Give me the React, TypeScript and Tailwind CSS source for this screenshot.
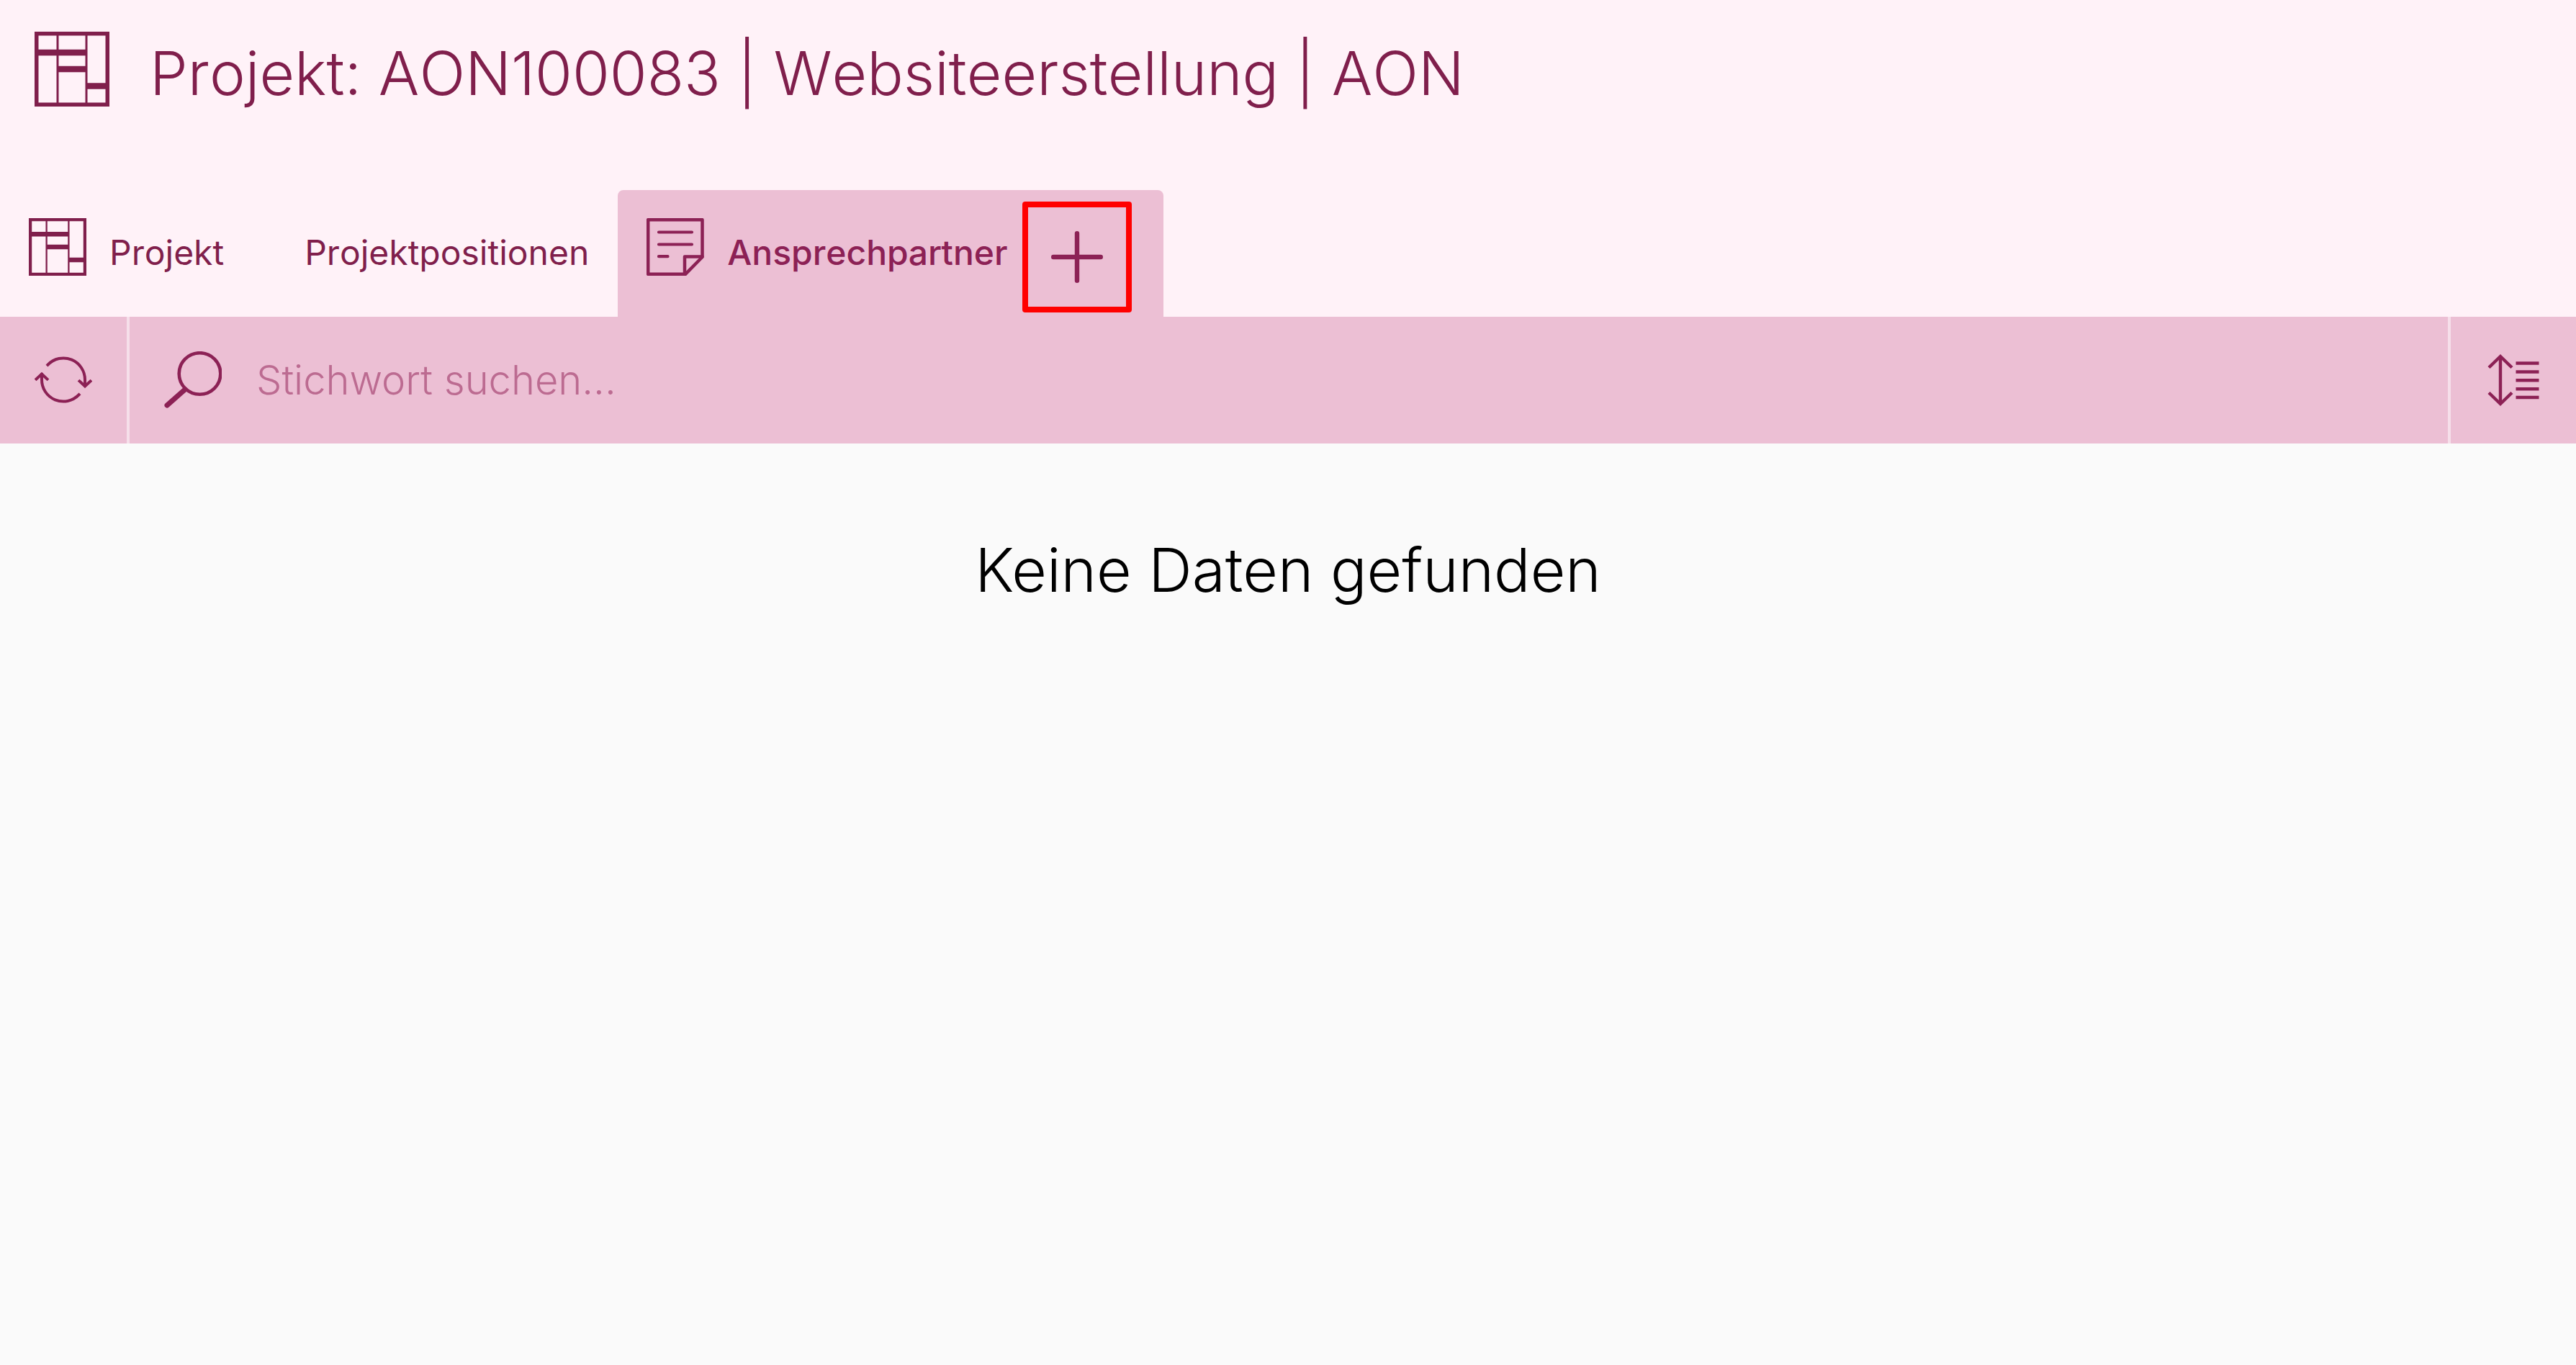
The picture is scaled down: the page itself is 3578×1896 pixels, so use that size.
import React from "react";

function ProjectIcon({ className }: { className: string }) {
  return (
    <svg viewBox="0 0 104 104" className={className} fill="none" stroke="currentColor" aria-hidden="true">
      <rect x="2.75" y="2.75" width="98.5" height="98.5" strokeWidth="5.5" />
      <path d="M32 3V101M72 3V101" strokeWidth="3" />
      <path d="M2 29H72M32 52H72M72 75.5H102" strokeWidth="8.5" />
    </svg>
  );
}

function NoteIcon({ className }: { className: string }) {
  return (
    <svg
      viewBox="0 0 80 80"
      className={className}
      fill="none"
      stroke="currentColor"
      strokeWidth="4.5"
      strokeLinejoin="round"
      strokeLinecap="round"
      aria-hidden="true"
    >
      <path d="M2.2 2.2H77.5V54L54 77.8H2.2Z" />
      <path d="M53 77V53.5H77.5" />
      <path d="M17 19.5H63M17 36.5H63M17 53.2H29.5" strokeWidth="4.2" />
    </svg>
  );
}

function PlusIcon({ className }: { className: string }) {
  return (
    <svg viewBox="0 0 72 72" className={className} fill="none" stroke="currentColor" strokeWidth="6.4" strokeLinecap="round" aria-hidden="true">
      <path d="M36 3.2V68.8M3.2 36H68.8" />
    </svg>
  );
}

function RefreshIcon({ className }: { className: string }) {
  return (
    <svg
      viewBox="0 0 80 80"
      className={className}
      fill="none"
      stroke="currentColor"
      strokeWidth="4"
      strokeLinecap="square"
      aria-hidden="true"
    >
      <path d="M18.4 18.6A30 30 0 0 1 70 40V47" />
      <path d="M62.5 41.5L70 48.5L77.5 41.5" />
      <path d="M61.6 60.4A30 30 0 0 1 10 39V32" />
      <path d="M2.5 38.5L10 31.5L17.5 38.5" />
    </svg>
  );
}

function SearchIcon({ className }: { className: string }) {
  return (
    <svg viewBox="0 0 80 80" className={className} fill="none" stroke="currentColor" aria-hidden="true">
      <circle cx="49.5" cy="31" r="28.8" strokeWidth="4.6" />
      <path d="M29 53L4 75" strokeWidth="7" strokeLinecap="round" />
    </svg>
  );
}

function SortIcon({ className }: { className: string }) {
  return (
    <svg viewBox="0 0 80 80" className={className} fill="none" stroke="currentColor" strokeWidth="4.4" aria-hidden="true">
      <path d="M22 7V73" />
      <path d="M6 22.5L22 7L38 22.5M6 57.5L22 73L38 57.5" />
      <path d="M43.5 16.5H75.5M43.5 28.5H75.5M43.5 40.3H75.5M43.5 52.2H75.5M43.5 64H75.5" />
    </svg>
  );
}

export default function App() {
  return (
    <div className="flex min-h-screen flex-col bg-[#fafafa] font-['Inter',sans-serif]">
      <header className="bg-[#fff2f8] text-[#801f4c] [font-kerning:none]">
        <div className="flex h-[264px] items-start gap-14 px-12 pt-11">
          <ProjectIcon className="size-[104px] shrink-0" />
          <h1 className="text-[84px] leading-[116px] font-light whitespace-nowrap">
            Projekt: AON100083 | Websiteerstellung | AON
          </h1>
        </div>

        <nav className="flex h-44 items-stretch text-[48px] whitespace-nowrap" aria-label="Bereiche">
          <button type="button" className="flex items-center gap-8 px-10 pb-[3px]">
            <ProjectIcon className="mb-4 size-20 shrink-0" />
            <span>Projekt</span>
          </button>
          <button type="button" className="pr-10 pb-[3px] pl-[72px]">
            Projektpositionen
          </button>
          <div className="flex items-stretch gap-5 rounded-t-lg bg-[#ecbfd4] pr-11 pl-10 text-[#8c2155]">
            <button type="button" aria-current="page" className="flex items-center gap-8 pb-[3px] font-medium">
              <NoteIcon className="mb-4 size-20 shrink-0" />
              <span>Ansprechpartner</span>
            </button>
            <button
              type="button"
              aria-label="Ansprechpartner hinzufügen"
              className="mt-4 flex h-[154px] w-[152px] items-center justify-center rounded-sm border-8 border-[#ff0000]"
            >
              <PlusIcon className="size-[72px]" />
            </button>
          </div>
        </nav>
      </header>

      <div className="flex h-44 items-stretch bg-[#ecbfd4] text-[#8c2155]">
        <button type="button" aria-label="Aktualisieren" className="flex w-[180px] items-center justify-center border-r-4 border-[#f6dfea]">
          <RefreshIcon className="size-20" />
        </button>
        <label className="flex flex-1 items-center gap-12 px-12">
          <SearchIcon className="size-20 shrink-0" />
          <input
            type="search"
            aria-label="Stichwort suchen"
            placeholder="Stichwort suchen..."
            className="min-w-0 flex-1 bg-transparent text-[56px] font-light outline-none placeholder:text-[#bc6b91]"
          />
        </label>
        <button type="button" aria-label="Sortierung" className="flex w-[178px] items-center justify-center border-l-4 border-[#f6dfea]">
          <SortIcon className="size-20" />
        </button>
      </div>

      <main className="flex-1 pt-[118px] text-center">
        <p className="text-[84px] leading-[116px] font-light text-black">Keine Daten gefunden</p>
      </main>
    </div>
  );
}
